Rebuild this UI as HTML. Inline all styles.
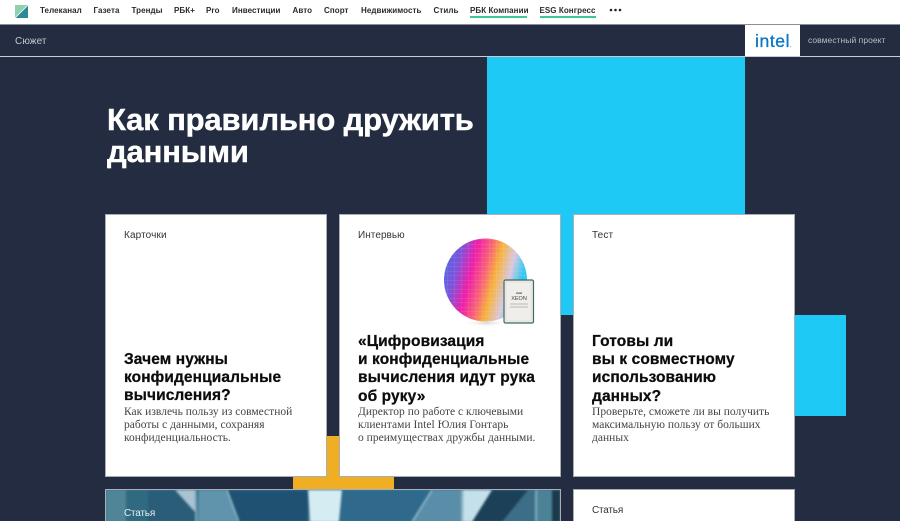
<!DOCTYPE html>
<html lang="ru"><head><meta charset="utf-8"><title>Как правильно дружить данными</title>
<style>
*{box-sizing:border-box}
html,body{margin:0;padding:0;width:900px;height:521px;overflow:hidden}
body{background:#232c40;font-family:"Liberation Sans",sans-serif}
#root{position:relative;width:900px;height:521px;overflow:hidden;background:#232c40}
.abs{position:absolute}
#nav{left:0;top:0;width:900px;height:25px;background:#fff;border-bottom:1px solid #8a8f9a}
.n{position:absolute;top:5px;font-size:8px;line-height:12px;font-weight:700;color:#2b2b2b;white-space:nowrap;letter-spacing:.07px}
.u{position:absolute;top:16px;height:1.5px;background:#3fc79a}
#bar{left:0;top:25px;width:900px;height:32px;border-bottom:1px solid #c9ccd2;background:#232c40}
.card{position:absolute;background:#fff;border:1px solid #a9adb6;overflow:hidden}
.lab{position:absolute;left:18px;top:15px;font-size:10px;line-height:12px;color:#333;letter-spacing:.12px}
.h{position:absolute;left:18px;font-size:15.5px;line-height:18.2px;font-weight:700;color:#0c0c0c;white-space:nowrap;letter-spacing:.1px;-webkit-text-stroke:.25px #0c0c0c}
.p{position:absolute;left:18px;font-family:"Liberation Serif",serif;font-size:11.5px;line-height:12.8px;color:#444;white-space:nowrap;letter-spacing:.02px}
</style></head>
<body>
<div id="root">
<div class="abs" id="nav">
<svg class="abs" style="left:15px;top:5px" width="13" height="13" viewBox="0 0 13 13"><rect width="13" height="13" fill="#fff"/><path d="M0 0H12.5L0 12.5Z" fill="#8fd0ad"/><path d="M13 .6V13H.6Z" fill="#2a8a96"/></svg>
<span class="n" style="left:40px">Телеканал</span>
<span class="n" style="left:93.5px">Газета</span>
<span class="n" style="left:131.5px">Тренды</span>
<span class="n" style="left:174px">РБК+</span>
<span class="n" style="left:206px">Pro</span>
<span class="n" style="left:232px">Инвестиции</span>
<span class="n" style="left:292.5px">Авто</span>
<span class="n" style="left:324px">Спорт</span>
<span class="n" style="left:361px">Недвижимость</span>
<span class="n" style="left:433.5px">Стиль</span>
<span class="n" style="left:470px">РБК Компании</span><i class="u" style="left:470px;width:57px"></i>
<span class="n" style="left:539.5px">ESG Конгресс</span><i class="u" style="left:539.5px;width:56px"></i>
<svg class="abs" style="left:609px;top:8px" width="13" height="4"><circle cx="2" cy="2" r="1.3" fill="#222"/><circle cx="6.5" cy="2" r="1.3" fill="#222"/><circle cx="11" cy="2" r="1.3" fill="#222"/></svg>
</div>
<div class="abs" id="bar">
<span class="abs" style="left:15px;top:10.5px;font-size:10px;line-height:12px;color:#c5c8ce;letter-spacing:.1px">Сюжет</span>
<div class="abs" style="left:745px;top:0;width:55px;height:31px;background:#fff">
<span class="abs" style="left:10px;top:6px;font-size:17.5px;line-height:20px;color:#0a78c8;letter-spacing:.6px;-webkit-text-stroke:.35px #0a78c8;white-space:nowrap">intel<span style="font-size:4px">.</span></span>
</div>
<span class="abs" style="left:808px;top:9px;font-size:8.5px;line-height:12px;color:#b9bdc5;letter-spacing:.05px;white-space:nowrap">совместный проект</span>
</div>
<div class="abs" style="left:487px;top:57px;width:258px;height:258px;background:#1fc9f5"></div>
<div class="abs" style="left:795px;top:315px;width:51px;height:101px;background:#1fc9f5"></div>
<div class="abs" style="left:327px;top:436px;width:13px;height:53px;background:#f0ae22"></div>
<div class="abs" style="left:293px;top:477px;width:101px;height:12px;background:#f0ae22"></div>
<div class="abs" style="left:107px;top:104px;font-size:31px;line-height:32px;font-weight:700;color:#fff;white-space:nowrap;letter-spacing:-.15px;-webkit-text-stroke:.4px #fff">Как правильно дружить<br>данными</div>

<div class="card" style="left:105px;top:214px;width:222px;height:263px">
<span class="lab">Карточки</span>
<div class="h" style="top:136px">Зачем нужны<br>конфиденциальные<br>вычисления?</div>
<div class="p" style="top:191px">Как извлечь пользу из совместной<br>работы с данными, сохраняя<br>конфиденциальность.</div>
</div>

<div class="card" style="left:339px;top:214px;width:222px;height:263px">
<span class="lab" style="letter-spacing:.05px">Интервью</span>
<svg class="abs" style="left:100px;top:20px" width="100" height="100" viewBox="0 0 100 100">
<defs>
<linearGradient id="w" x1="0" y1="0" x2="1" y2="0.25">
<stop offset="0" stop-color="#3f6ee0"/><stop offset=".22" stop-color="#7a55dc"/><stop offset=".4" stop-color="#f01fa8"/><stop offset=".55" stop-color="#f8607a"/><stop offset=".68" stop-color="#f7b13c"/><stop offset=".85" stop-color="#d8c8e0"/><stop offset="1" stop-color="#30c8f0"/>
</linearGradient>
<pattern id="g" width="7" height="4.5" patternUnits="userSpaceOnUse"><path d="M0 0H7M0 0V4.5" stroke="#fff" stroke-opacity=".2" stroke-width=".7" fill="none"/></pattern>
<radialGradient id="sh"><stop offset="0" stop-color="#bbb" stop-opacity=".6"/><stop offset="1" stop-color="#fff" stop-opacity="0"/></radialGradient>
</defs>
<ellipse cx="46" cy="88" rx="24" ry="4" fill="url(#sh)"/>
<circle cx="45.5" cy="45" r="41.5" fill="url(#w)"/>
<circle cx="45.5" cy="45" r="41.5" fill="url(#g)"/>
<rect x="64" y="45" width="29.5" height="43" rx="1.5" fill="#e9e7e2" stroke="#3f6a62" stroke-width="1.2"/>
<rect x="67" y="48" width="23.5" height="37" fill="#efeeea"/>
<text x="79" y="59" font-size="3" font-weight="700" text-anchor="middle" fill="#333" font-family="Liberation Sans">intel</text>
<text x="79" y="65" font-size="5.5" text-anchor="middle" fill="#444" font-family="Liberation Sans">XEON</text>
<path d="M70 69H88M70 72H88" stroke="#aaa" stroke-width=".8"/>
</svg>
<div class="h" style="top:118px">«Цифровизация<br>и конфиденциальные<br>вычисления идут рука<br>об руку»</div>
<div class="p" style="top:191px">Директор по работе с ключевыми<br>клиентами Intel Юлия Гонтарь<br>о преимуществах дружбы данными.</div>
</div>

<div class="card" style="left:573px;top:214px;width:222px;height:263px">
<span class="lab">Тест</span>
<div class="h" style="top:118px">Готовы ли<br>вы к совместному<br>использованию<br>данных?</div>
<div class="p" style="top:191px">Проверьте, сможете ли вы получить<br>максимальную пользу от больших<br>данных</div>
</div>

<div class="card" style="left:105px;top:489px;width:456px;height:40px;background:#3f7a96">
<svg class="abs" style="left:0;top:0;filter:blur(1px)" width="454" height="32" viewBox="0 0 454 32">
<defs><linearGradient id="c" x1="0" x2="0" y1="0" y2="1"><stop offset="0" stop-color="#1f4a66"/><stop offset="1" stop-color="#3f7a98"/></linearGradient></defs>
<rect width="454" height="32" fill="url(#c)"/>
<path d="M0 0H20V32H0Z" fill="#4f8596"/>
<path d="M20 0H42V32H20Z" fill="#2f6a80"/>
<path d="M42 0H68L89 22V32H42Z" fill="#2a5d78"/>
<path d="M69 0H89V22Z" fill="#a9c4d0"/>
<path d="M92 0H122L132 32H92Z" fill="#5f94ac"/>
<path d="M121 0H202V32H132Z" fill="#1f5272"/>
<path d="M202 0H236L233 32H204Z" fill="#d4ecf2"/>
<path d="M236 0H326L306 32H233Z" fill="#2f6a8c"/>
<path d="M326 0H356V32H306Z" fill="#5a8ea8"/>
<path d="M357 0H386L369 32H357Z" fill="#c4e0ea"/>
<path d="M386 0H422L396 32H366Z" fill="#1c4058"/>
<path d="M422 0H430V32H396Z" fill="#3c6e88"/>
<path d="M430 0H446V32H430Z" fill="#4c8296"/>
<path d="M446 0H454V32H446Z" fill="#1c3a4c"/>
<path d="M90 0V32M121 0L133 32M326 0L306 32M356 0V32M430 0V32" stroke="#a9cfdc" stroke-width="1.2" fill="none"/>
</svg>
<span class="lab" style="color:#e6eef2;top:17.5px;letter-spacing:-.2px">Статья</span>
</div>

<div class="card" style="left:573px;top:489px;width:222px;height:40px">
<span class="lab" style="top:15px;letter-spacing:-.2px">Статья</span>
</div>
</div>
</body></html>
